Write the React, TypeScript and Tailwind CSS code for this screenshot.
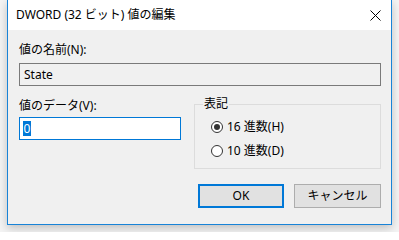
const font = { fontFamily: '"Noto Sans", "Noto Sans CJK JP", sans-serif' };

const Radio = ({ checked, label }: { checked?: boolean; label: string }) => (
  <label className="flex items-center h-[16px] text-[12px] text-black">
    <span className="w-[12px] h-[12px] rounded-full border border-[#333333] bg-white flex items-center justify-center">
      {checked && <span className="w-[6px] h-[6px] rounded-full bg-[#333333]" />}
    </span>
    <span className="ml-[4px]">{label}</span>
  </label>
);

const App = () => {
  return (
    <div className="w-[399px] h-[232px] bg-[#f4f4f4] pl-[7px]" style={font}>
      <div className="w-[385px] h-[225px] flex flex-col border-x border-b border-[#1883d7] bg-[#f0f0f0] shadow-[0_3px_9px_rgba(0,0,0,0.22)]">
        <div className="h-[30px] bg-white flex items-center justify-between pl-[8px] pr-[10px]">
          <span className="text-[12px] text-black leading-none">DWORD (32 ビット) 値の編集</span>
          <svg width="11" height="11" viewBox="0 0 11 11" className="text-black">
            <path d="M0.5 0.5 L10.5 10.5 M10.5 0.5 L0.5 10.5" stroke="currentColor" strokeWidth="1" />
          </svg>
        </div>
        <div className="flex-1 flex flex-col pl-[11px] pr-[10px] pt-[12px]">
          <div className="h-[16px] leading-[16px] text-[12px] text-black">値の名前(N):</div>
          <div className="mt-[5px] h-[23px] border border-[#7a7a7a] bg-[#f0f0f0] flex items-center px-[4px] text-[12px] text-black">
            State
          </div>
          <div className="flex mt-[10px] gap-[13px]">
            <div className="w-[162px] flex flex-col">
              <div className="mt-[2px] h-[16px] leading-[16px] text-[12px] text-black">値のデータ(V):</div>
              <div className="mt-[3px] h-[23px] border border-[#0078d7] bg-white flex items-center px-[3px]">
                <span className="bg-[#0078d7] text-white text-[12px] leading-[15px] px-[0.5px]">0</span>
              </div>
            </div>
            <fieldset className="flex-1 h-[73px] border border-[#dcdcdc] pt-[7px]">
              <legend className="ml-[8px] px-[1px] text-[12px] leading-[16px] text-black">表記</legend>
              <div className="flex flex-col gap-[8px] pl-[16px]">
                <Radio checked label="16 進数(H)" />
                <Radio label="10 進数(D)" />
              </div>
            </fieldset>
          </div>
          <div className="flex justify-end gap-[10px] mt-[15px]">
            <button className="w-[86px] h-[24px] border-2 border-[#0078d7] bg-[#e1e1e1] text-[12px] text-black">OK</button>
            <button className="w-[87px] h-[24px] border border-[#adadad] bg-[#e1e1e1] text-[12px] text-black">キャンセル</button>
          </div>
        </div>
      </div>
    </div>
  );
};

export default App;
